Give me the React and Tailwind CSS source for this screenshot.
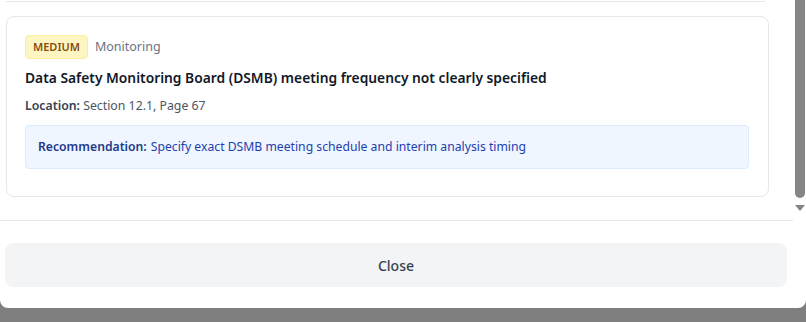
import React from "react";

const issue = {
  severity: "MEDIUM",
  category: "Monitoring",
  title: "Data Safety Monitoring Board (DSMB) meeting frequency not clearly specified",
  location: "Section 12.1, Page 67",
  recommendation: "Specify exact DSMB meeting schedule and interim analysis timing",
};

const IssueCard = ({ item }) => (
  <div className="border border-gray-200 rounded-lg bg-white pt-[18px] pb-[27px] pl-[18px] pr-[19px]">
    <div className="flex items-center gap-[7px]">
      <span className="bg-[#fdf6c3] border border-[#fbeea0] text-[#854d0e] text-[11px] font-semibold rounded px-[7px] h-[24px] leading-[22px]">
        {item.severity}
      </span>
      <span className="text-[12.5px] text-gray-500">{item.category}</span>
    </div>
    <h3 className="mt-[9px] text-[13.8px] font-semibold text-gray-900 leading-[20px]">
      {item.title}
    </h3>
    <p className="mt-[9px] text-[12.3px] text-gray-600 leading-[18px]">
      <span className="font-semibold text-gray-700">Location:</span> {item.location}
    </p>
    <div className="mt-[10px] bg-blue-50 border border-blue-100 rounded px-[12px] h-[44px] flex items-center text-[12.2px]">
      <span className="font-semibold text-[#1e3a8a]">Recommendation:</span>
      <span className="ml-1 text-[#1e40af]">{item.recommendation}</span>
    </div>
  </div>
);

export default function App() {
  return (
    <div
      className="h-[322px] w-full bg-[#7f7f7f] overflow-hidden"
      style={{ fontFamily: '"Noto Sans", "Open Sans", sans-serif' }}
    >
      <div className="bg-white h-[308px] rounded-b-lg flex flex-col">
        <div className="h-[220px] grid grid-cols-[1fr_11px]">
          <div className="min-w-0 pl-[6px] pr-[26px]">
            <div className="h-[2px] border-b border-gray-200 mr-[4px]" />
            <div className="mt-[14px]">
              <IssueCard item={issue} />
            </div>
          </div>
          <div className="flex flex-col items-start">
            <div className="w-[10px] h-[198px] bg-[#858585] rounded-b-[5px]" />
            <svg width="10" height="8" viewBox="0 0 10 8" className="mt-[6px]">
              <polygon points="0,1 10,1 5,7" fill="#858585" />
            </svg>
          </div>
        </div>
        <div className="border-t border-gray-200 mr-[13px] pt-[22px] pl-[5px] pr-[6px]">
          <button className="w-full h-[44px] bg-gray-100 rounded-lg text-[14px] font-medium text-gray-700">
            Close
          </button>
        </div>
      </div>
    </div>
  );
}
